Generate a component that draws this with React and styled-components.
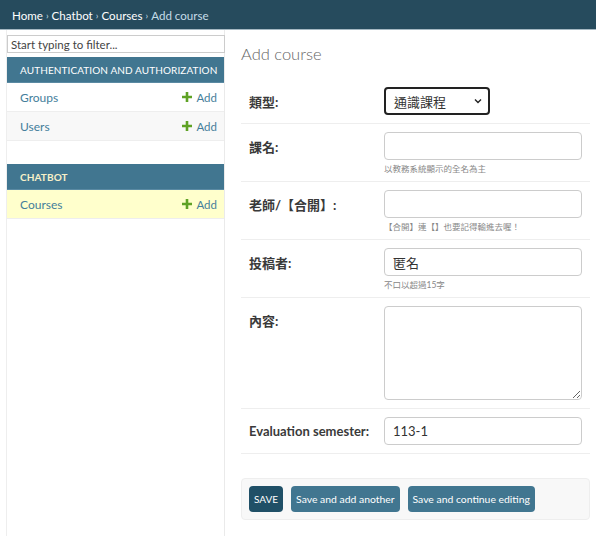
import React from "react";
import styled, { createGlobalStyle } from "styled-components";

const Global = createGlobalStyle`
  html, body { margin: 0; padding: 0; background: #fff; }
  body { font-family: "Lato", "Noto Sans CJK TC", sans-serif; color: #333; }
  * { box-sizing: border-box; }
`;

const Header = styled.div`
  height: 30px;
  background: #264b5d;
  display: flex;
  align-items: center;
  padding: 2px 12px 0 12px;
  font-size: 11.6px;
  color: #fff;
  border-bottom: 1px solid #a5b8c2;
  white-space: nowrap;
`;
const Crumb = styled.span`
  color: ${(p) => (p.$current ? "#c4dce8" : "#fff")};
`;
const Sep = styled.span`
  margin: 0 3px;
  font-size: 9.5px;
  color: #c4dce8;
`;

const Layout = styled.div`
  display: flex;
  align-items: stretch;
  min-height: calc(100vh - 30px);
`;

const Sidebar = styled.nav`
  width: 219px;
  margin-left: 6px;
  border-left: 1px solid #eee;
  border-right: 1px solid #eaeaea;
  padding-top: 5px;
  flex-shrink: 0;
`;

const Filter = styled.input`
  display: block;
  width: 218px;
  height: 18px;
  margin: 0 0 4px 0;
  border: 1px solid #ccc;
  font-family: inherit;
  font-size: 11.5px;
  padding: 0 3px;
  color: #333;
  &::placeholder { color: #444; }
`;

const Module = styled.div`
  margin-bottom: ${(p) => p.$gap || 0}px;
`;
const Caption = styled.div`
  height: 26px;
  background: #417690;
  color: ${(p) => (p.$current ? "#f8f0c8" : "#fff")};
  font-size: 10px;
  letter-spacing: 0.1px;
  font-weight: ${(p) => (p.$current ? 700 : 400)};
  text-transform: uppercase;
  display: flex;
  align-items: center;
  padding-left: 13px;
  border-bottom: 1px solid #5a8aa3;
  white-space: nowrap;
`;
const Row = styled.div`
  height: 29px;
  display: flex;
  align-items: center;
  justify-content: space-between;
  padding: 0 7px 0 13px;
  background: ${(p) => p.$bg};
  border-bottom: 1px solid #eee;
  font-size: 12px;
  color: #447e9b;
`;
const AddLink = styled.span`
  display: flex;
  align-items: center;
  gap: 4px;
  font-size: 11.5px;
  color: #447e9b;
`;
const Plus = () => (
  <svg width="10" height="10" viewBox="0 0 10 10">
    <path d="M3.7 0h2.6v3.7H10v2.6H6.3V10H3.7V6.3H0V3.7h3.7z" fill="#5fa225" />
  </svg>
);

const Main = styled.main`
  flex: 1;
  margin-left: 16px;
  margin-right: 6px;
`;
const Title = styled.h1`
  margin: 12px 0 13px 0;
  font-size: 16.5px;
  font-weight: 300;
  color: #666;
  line-height: 24px;
`;
const FormRow = styled.div`
  display: flex;
  padding: 8px 8px;
  border-bottom: 1px solid #eee;
`;
const Label = styled.label`
  width: 135px;
  flex-shrink: 0;
  font-size: 13px;
  font-weight: 700;
  color: #3a3a3a;
  height: 28px;
  display: flex;
  align-items: center;
  white-space: nowrap;
`;
const Field = styled.div`
  display: flex;
  flex-direction: column;
`;
const TextInput = styled.input`
  display: block;
  width: 198px;
  height: 28px;
  border: 1px solid #ccc;
  border-radius: 4px;
  padding: 0 8px;
  font-family: inherit;
  font-size: 13px;
  color: #333;
`;
const TextArea = styled.textarea`
  width: 198px;
  height: 94px;
  border: 1px solid #ccc;
  border-radius: 4px;
  font-family: inherit;
  display: block;
  margin: 0;
`;
const Select = styled.div`
  width: 106px;
  height: 28px;
  border: 2px solid #222;
  border-radius: 4px;
  display: flex;
  align-items: center;
  justify-content: space-between;
  padding: 0 6px 0 8px;
  font-size: 13px;
  color: #333;
`;
const Help = styled.div`
  font-size: 8.5px;
  color: #888;
  height: 13px;
  line-height: 10px;
  padding-top: 4px;
  white-space: nowrap;
`;

const Submit = styled.div`
  margin-top: 24px;
  background: #f8f8f8;
  border: 1px solid #eee;
  border-radius: 4px;
  padding: 7px;
  display: flex;
  gap: 8px;
`;
const Button = styled.button`
  height: 26px;
  padding: 0 5px;
  border: none;
  border-radius: 4px;
  background: ${(p) => (p.$primary ? "#205067" : "#417690")};
  color: #fff;
  font-family: inherit;
  font-size: ${(p) => (p.$primary ? "10px" : "10.4px")};
  white-space: nowrap;
`;

export default function App() {
  return (
    <>
      <Global />
      <Header>
        <Crumb>Home</Crumb><Sep>›</Sep>
        <Crumb>Chatbot</Crumb><Sep>›</Sep>
        <Crumb>Courses</Crumb><Sep>›</Sep>
        <Crumb $current>Add course</Crumb>
      </Header>
      <Layout>
        <Sidebar>
          <Filter placeholder="Start typing to filter..." />
          <Module $gap={23}>
            <Caption>Authentication and Authorization</Caption>
            <Row $bg="#fff"><span>Groups</span><AddLink><Plus />Add</AddLink></Row>
            <Row $bg="#f8f8f8"><span>Users</span><AddLink><Plus />Add</AddLink></Row>
          </Module>
          <Module>
            <Caption $current>Chatbot</Caption>
            <Row $bg="#ffffcc"><span>Courses</span><AddLink><Plus />Add</AddLink></Row>
          </Module>
        </Sidebar>
        <Main>
          <Title>Add course</Title>
          <FormRow>
            <Label>類型:</Label>
            <Field>
              <Select>
                <span>通識課程</span>
                <svg width="8" height="6" viewBox="0 0 8 6"><path d="M1 1.5l3 3 3-3" stroke="#222" strokeWidth="1.4" fill="none" /></svg>
              </Select>
            </Field>
          </FormRow>
          <FormRow>
            <Label>課名:</Label>
            <Field>
              <TextInput />
              <Help>以教務系統顯示的全名為主</Help>
            </Field>
          </FormRow>
          <FormRow>
            <Label>老師/【合開】:</Label>
            <Field>
              <TextInput />
              <Help>【合開】連【】也要記得輸進去喔！</Help>
            </Field>
          </FormRow>
          <FormRow>
            <Label>投稿者:</Label>
            <Field>
              <TextInput defaultValue="匿名" />
              <Help>不口以超過15字</Help>
            </Field>
          </FormRow>
          <FormRow>
            <Label>內容:</Label>
            <Field>
              <TextArea />
            </Field>
          </FormRow>
          <FormRow>
            <Label>Evaluation semester:</Label>
            <Field>
              <TextInput defaultValue="113-1" />
            </Field>
          </FormRow>
          <Submit>
            <Button $primary>SAVE</Button>
            <Button>Save and add another</Button>
            <Button>Save and continue editing</Button>
          </Submit>
        </Main>
      </Layout>
    </>
  );
}
